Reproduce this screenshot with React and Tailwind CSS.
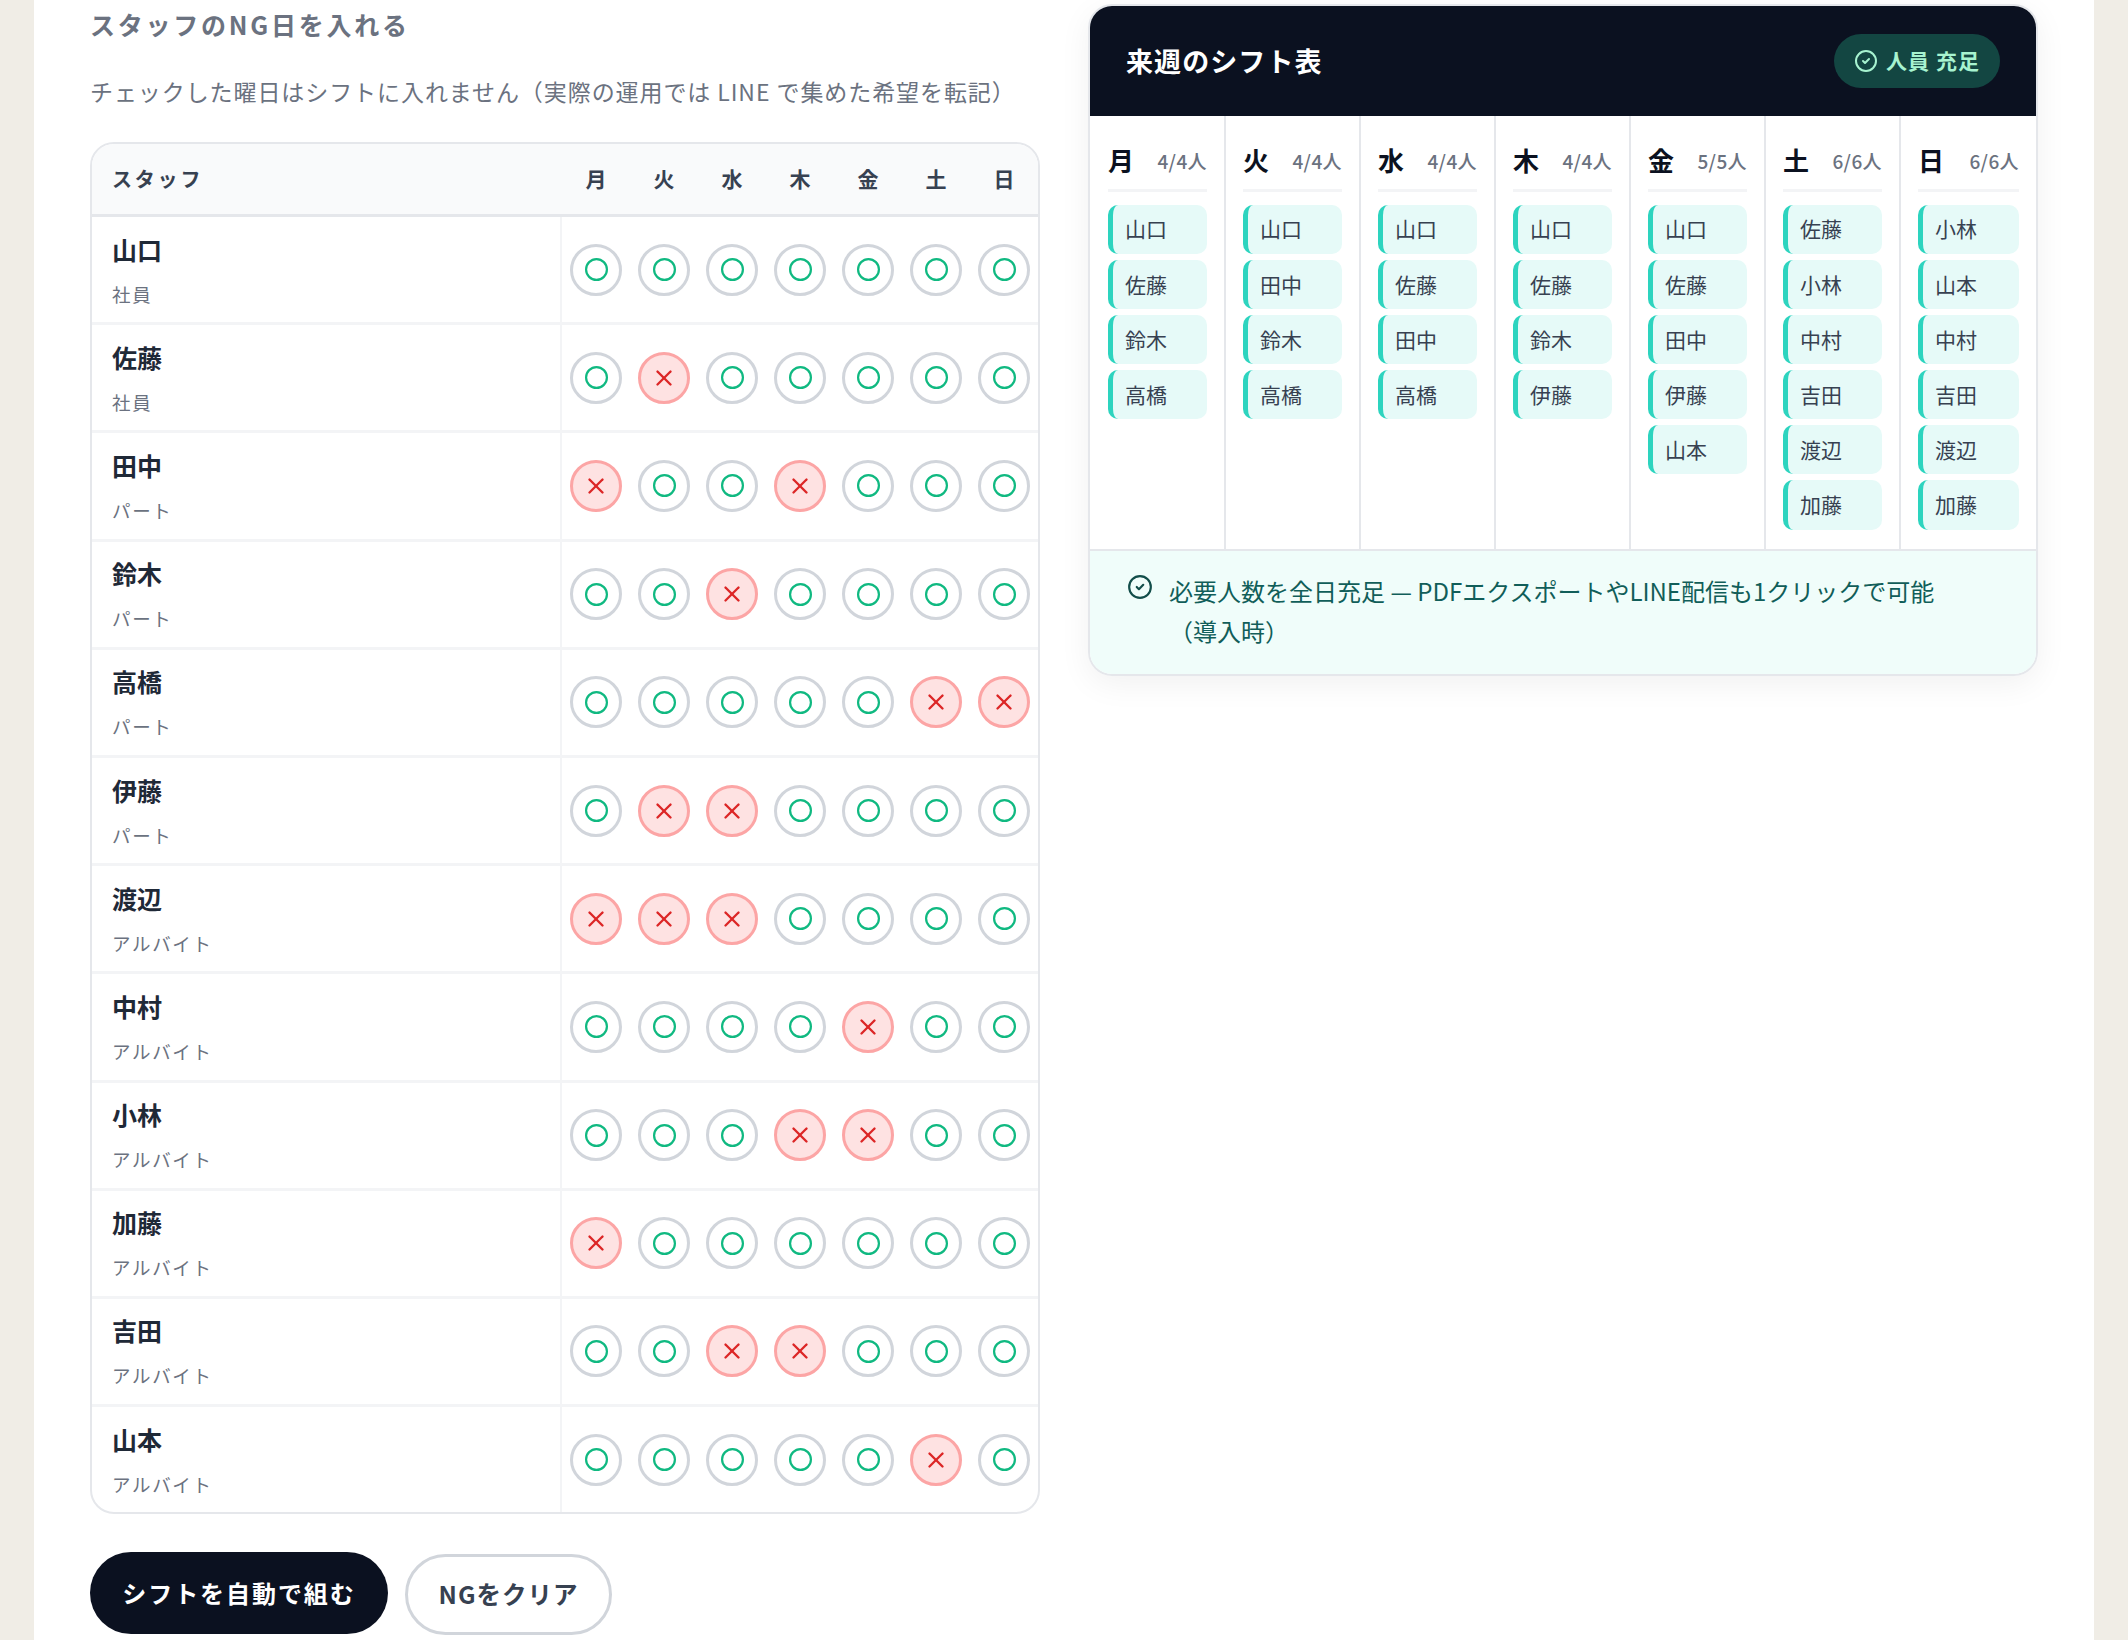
import React from "react";
import { Circle, X, CircleCheck } from "lucide-react";

const days = ["月", "火", "水", "木", "金", "土", "日"];
const staff = [
  ["山口", "社員", []],
  ["佐藤", "社員", [1]],
  ["田中", "パート", [0, 3]],
  ["鈴木", "パート", [2]],
  ["高橋", "パート", [5, 6]],
  ["伊藤", "パート", [1, 2]],
  ["渡辺", "アルバイト", [0, 1, 2]],
  ["中村", "アルバイト", [4]],
  ["小林", "アルバイト", [3, 4]],
  ["加藤", "アルバイト", [0]],
  ["吉田", "アルバイト", [2, 3]],
  ["山本", "アルバイト", [5]],
];
const schedule = [
  ["4/4人", ["山口", "佐藤", "鈴木", "高橋"]],
  ["4/4人", ["山口", "田中", "鈴木", "高橋"]],
  ["4/4人", ["山口", "佐藤", "田中", "高橋"]],
  ["4/4人", ["山口", "佐藤", "鈴木", "伊藤"]],
  ["5/5人", ["山口", "佐藤", "田中", "伊藤", "山本"]],
  ["6/6人", ["佐藤", "小林", "中村", "吉田", "渡辺", "加藤"]],
  ["6/6人", ["小林", "山本", "中村", "吉田", "渡辺", "加藤"]],
];

function Mark({ ng }) {
  return (
    <div className="flex h-full w-[68px] items-center justify-center">
      <div
        className={
          ng
            ? "flex h-[52px] w-[52px] items-center justify-center rounded-full border-[3px] border-[#fca5a5] bg-[#fee2e2] text-[#dc2626]"
            : "flex h-[52px] w-[52px] items-center justify-center rounded-full border-[3px] border-[#d1d5db] bg-white text-[#10b981]"
        }
      >
        {ng ? <X size={26} strokeWidth={2.2} /> : <Circle size={25} strokeWidth={2.1} />}
      </div>
    </div>
  );
}

export default function App() {
  return (
    <div className="h-[1640px] overflow-hidden bg-[#f0ede6] px-[34px] font-['Noto_Sans_CJK_JP',sans-serif]">
      <div className="grid h-full grid-cols-[950px_950px] items-start gap-[48px] bg-white pl-[56px] pr-[56px]">
        <div>
          <h2 className="mt-[6px] text-[25px] leading-[36px] font-bold tracking-[0.11em] text-[#6b7280]">スタッフのNG日を入れる</h2>
          <p className="mt-[31px] text-[23px] leading-[36px] tracking-[0.04em] text-[#6b7280]">
            チェックした曜日はシフトに入れません（実際の運用では LINE で集めた希望を転記）
          </p>
          <div className="mt-[33px] overflow-hidden rounded-[24px] border-[2px] border-[#e5e7eb]">
            <div className="flex h-[73px] items-center border-b-[3px] border-[#e5e7eb] bg-[#f9fafb] text-[21px] font-bold text-[#374151]">
              <div className="flex-1 pl-[20px] text-[20px] tracking-[0.14em]">スタッフ</div>
              {days.map((d) => (
                <div key={d} className="w-[68px] text-center">{d}</div>
              ))}
            </div>
            {staff.map(([name, role, ng], i) => (
              <div key={name} className={i === 11 ? "flex h-[105px]" : "flex h-[108.2px] border-b-[3px] border-[#f3f4f6]"}>
                <div className="flex flex-1 flex-col justify-center border-r-[2px] border-[#f3f4f6] pb-[1px] pl-[20px]">
                  <div className="text-[25px] leading-[36px] font-bold text-[#1f2937]">{name}</div>
                  <div className="mt-[14px] text-[18.5px] leading-[27px] tracking-[0.09em] text-[#6b7280]">{role}</div>
                </div>
                {days.map((_, d) => (
                  <Mark key={d} ng={ng.includes(d)} />
                ))}
              </div>
            ))}
          </div>
          <div className="mt-[38px] flex items-start gap-[17px]">
            <button className="h-[82px] w-[298px] rounded-full bg-[#0b1120] text-[24px] font-bold tracking-[0.08em] text-white">シフトを自動で組む</button>
            <button className="mt-[2px] h-[81px] w-[207px] rounded-full border-[3px] border-[#d1d5db] bg-white text-[24.5px] font-semibold tracking-[0.04em] text-[#374151]">NGをクリア</button>
          </div>
        </div>

        <div className="mt-[4px] overflow-hidden rounded-[24px] border-[2px] border-[#e5e7eb] shadow-[0_8px_32px_rgba(0,0,0,0.06)]">
          <div className="flex h-[110px] items-center justify-between bg-[#0b1120] pl-[36px] pr-[36px]">
            <div className="text-[27px] font-bold tracking-[0.04em] text-white">来週のシフト表</div>
            <div className="flex h-[54px] items-center gap-[8px] rounded-full bg-[#134642] px-[20px] text-[21px] font-bold tracking-[0.05em] text-[#a7f3d0]">
              <CircleCheck size={24} strokeWidth={2} />
              <span>人員 充足</span>
            </div>
          </div>
          <div className="grid h-[435px] grid-cols-7 border-b-[2px] border-[#e5e7eb] bg-white pl-[1px]">
            {schedule.map(([count, names], d) => (
              <div key={d} className="border-r-[2px] border-[#e5e7eb] px-[17px] last:border-r-0">
                <div className="flex h-[76px] items-center justify-between border-b-[3px] border-[#f3f4f6] pt-[14px]">
                  <span className="text-[26px] font-bold text-[#0b1120]">{days[d]}</span>
                  <span className="pt-[3px] text-[19px] font-medium tracking-[0.02em] text-[#6b7280]">{count}</span>
                </div>
                <div className="mt-[12.5px] flex flex-col gap-[6px]">
                  {names.map((n) => (
                    <div key={n} className="flex h-[49.2px] items-center rounded-[10px] border-l-[5px] border-[#2dd4bf] bg-[#e6faf8] pl-[12px] text-[21px] text-[#374151]">{n}</div>
                  ))}
                </div>
              </div>
            ))}
          </div>
          <div className="flex h-[123px] gap-[16px] bg-[#f0fdfa] pl-[37px] pr-[36px] pt-[20px] text-[#115e59]">
            <CircleCheck size={26} strokeWidth={2} className="mt-[3px] shrink-0 text-[#134e4a]" />
            <p className="text-[24px] leading-[40px]">必要人数を全日充足 — PDFエクスポートやLINE配信も1クリックで可能<span className="inline-block">（導入時）</span></p>
          </div>
        </div>
      </div>
    </div>
  );
}
